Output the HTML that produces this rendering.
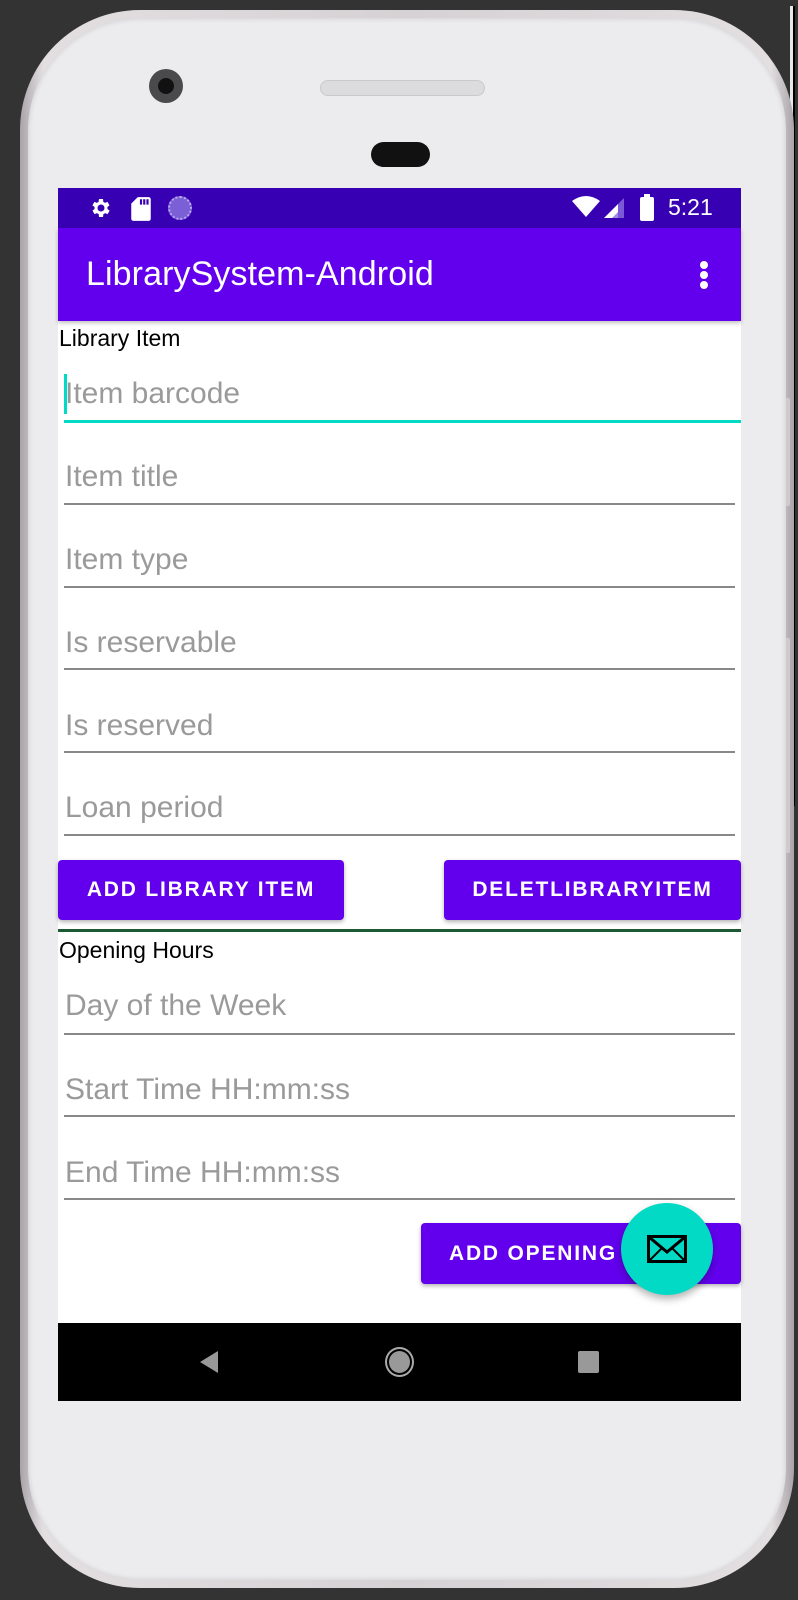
<!DOCTYPE html>
<html><head><meta charset="utf-8">
<style>
*{margin:0;padding:0;box-sizing:border-box}
body{width:798px;height:1600px;background:#333333;position:relative;overflow:hidden;font-family:"Liberation Sans",sans-serif}
.abs{position:absolute}
.frame{left:20px;top:10px;width:774px;height:1578px;border-radius:120px;background:linear-gradient(90deg,#a9a3a7,#e3dfe1 3%,#d6d1d4 50%,#e3dfe1 97%,#a9a3a7)}
.body{left:28px;top:18px;width:758px;height:1562px;border-radius:112px;background:#ececee;box-shadow:inset 0 0 6px rgba(0,0,0,.15)}
.screen{left:58px;top:188px;width:683px;height:1213px;background:#fff}
.status{left:58px;top:188px;width:683px;height:40px;background:#3700b3}
.appbar{left:58px;top:228px;width:683px;height:93px;background:#6200ee;box-shadow:0 2px 4px rgba(0,0,0,.25)}
.title{left:86px;top:255px;color:#fff;font-size:34px;letter-spacing:0.1px}
.lbl{left:59px;color:#000;font-size:23px}
.hint{left:65px;color:#9a9a9a;font-size:30px}
.ul{left:64px;width:671px;height:2px;background:#888}
.btn{background:#6200ee;color:#fff;font-size:21px;font-weight:bold;letter-spacing:1.8px;border-radius:4px;box-shadow:0 2px 4px rgba(0,0,0,.3);display:flex;align-items:center;justify-content:center}
.nav{left:58px;top:1323px;width:683px;height:78px;background:#000}
</style></head><body>
<div class="abs" style="left:793px;top:6px;width:2px;height:800px;background:#000"></div>
<div class="abs" style="left:790px;top:6px;width:3px;height:800px;background:#e8e8e8"></div>
<div class="abs frame"></div>
<div class="abs" style="left:783px;top:398px;width:7px;height:108px;background:#cfcacc;border-radius:2px"></div>
<div class="abs" style="left:783px;top:638px;width:7px;height:215px;background:#cfcacc;border-radius:2px"></div>
<div class="abs body"></div>
<div class="abs" style="left:149px;top:69px;width:34px;height:34px;border-radius:50%;background:#4a4a4c"></div>
<div class="abs" style="left:158px;top:78px;width:16px;height:16px;border-radius:50%;background:#111"></div>
<div class="abs" style="left:320px;top:80px;width:165px;height:16px;border-radius:8px;background:#dcdcde;border:1px solid #c9c9cb"></div>
<div class="abs" style="left:371px;top:142px;width:59px;height:25px;border-radius:13px;background:#111"></div>

<div class="abs screen"></div>
<div class="abs status"></div>
<svg class="abs" style="left:88px;top:196px" width="24" height="24" viewBox="0 0 24 24"><path fill="#fff" d="M19.4 13a7.5 7.5 0 0 0 0-2l2.1-1.6-2-3.5-2.5 1a7.4 7.4 0 0 0-1.7-1L15 3h-4l-.4 2.9a7.4 7.4 0 0 0-1.7 1l-2.5-1-2 3.5L6.6 11a7.5 7.5 0 0 0 0 2l-2.1 1.6 2 3.5 2.5-1c.5.4 1.1.8 1.7 1L11 21h4l.4-2.9c.6-.2 1.2-.6 1.7-1l2.5 1 2-3.5zM13 15.5a3.5 3.5 0 1 1 0-7 3.5 3.5 0 0 1 0 7z"/></svg>
<svg class="abs" style="left:130px;top:196px" width="22" height="26" viewBox="0 0 20 24"><path fill="#fff" d="M7 1h10a2 2 0 0 1 2 2v18a2 2 0 0 1-2 2H3a2 2 0 0 1-2-2V7z"/><path fill="#3700b3" d="M9 3h2v5H9zM12 3h2v5h-2zM15 3h2v5h-2z"/></svg>
<div class="abs" style="left:168px;top:196px;width:24px;height:24px;border-radius:50%;background:#7b5fd6;border:2px dotted #b9a9ee"></div>
<svg class="abs" style="left:572px;top:195px" width="60" height="30" viewBox="0 0 60 30"><path fill="#fff" d="M0 6 Q14 -4 28 6 L14 22z"/><path fill="#fff" d="M32 23 L46 9 V23z"/><path fill="#8c6fe0" d="M40 23 L46 17 V9 L52 3 V23z" opacity=".8"/></svg>
<div class="abs" style="left:640px;top:197px;width:14px;height:24px;background:#fff;border-radius:2px"></div>
<div class="abs" style="left:644px;top:194px;width:6px;height:4px;background:#fff"></div>
<div class="abs" style="left:668px;top:194px;color:#fff;font-size:23px">5:21</div>

<div class="abs appbar"></div>
<div class="abs title">LibrarySystem-Android</div>
<div class="abs" style="left:700px;top:261px;width:8px;height:8px;border-radius:50%;background:#fff"></div>
<div class="abs" style="left:700px;top:271px;width:8px;height:8px;border-radius:50%;background:#fff"></div>
<div class="abs" style="left:700px;top:281px;width:8px;height:8px;border-radius:50%;background:#fff"></div>

<div class="abs lbl" style="top:325px">Library Item</div>
<div class="abs" style="left:64px;top:374px;width:3px;height:40px;background:#03dac5"></div>
<div class="abs hint" style="top:377px">Item barcode</div>
<div class="abs" style="left:64px;top:420px;width:677px;height:3px;background:#03dac5"></div>
<div class="abs hint" style="top:460px">Item title</div>
<div class="abs ul" style="top:503px"></div>
<div class="abs hint" style="top:543px">Item type</div>
<div class="abs ul" style="top:586px"></div>
<div class="abs hint" style="top:626px">Is reservable</div>
<div class="abs ul" style="top:668px"></div>
<div class="abs hint" style="top:709px">Is reserved</div>
<div class="abs ul" style="top:751px"></div>
<div class="abs hint" style="top:791px">Loan period</div>
<div class="abs ul" style="top:834px"></div>

<div class="abs btn" style="left:58px;top:860px;width:286px;height:60px">ADD LIBRARY ITEM</div>
<div class="abs btn" style="left:444px;top:860px;width:297px;height:60px">DELETLIBRARYITEM</div>
<div class="abs" style="left:58px;top:929px;width:683px;height:3px;background:#1b5a32"></div>
<div class="abs lbl" style="top:937px">Opening Hours</div>
<div class="abs hint" style="top:989px">Day of the Week</div>
<div class="abs ul" style="top:1033px"></div>
<div class="abs hint" style="top:1073px">Start Time HH:mm:ss</div>
<div class="abs ul" style="top:1115px"></div>
<div class="abs hint" style="top:1156px">End Time HH:mm:ss</div>
<div class="abs ul" style="top:1198px"></div>
<div class="abs btn" style="left:421px;top:1223px;width:320px;height:61px;justify-content:flex-start;padding-left:28px">ADD OPENING HOURS</div>
<div class="abs" style="left:621px;top:1203px;width:92px;height:92px;border-radius:50%;background:#03dac5;box-shadow:0 4px 8px rgba(0,0,0,.3)"></div>
<svg class="abs" style="left:647px;top:1235px" width="40" height="28" viewBox="0 0 40 28"><rect x="1.5" y="1.5" width="37" height="25" fill="none" stroke="#000" stroke-width="3"/><path d="M2 2 L20 17 L38 2" fill="none" stroke="#000" stroke-width="3"/><path d="M2 26 L15 13 M38 26 L25 13" stroke="#000" stroke-width="2"/></svg>

<div class="abs nav"></div>
<svg class="abs" style="left:198px;top:1350px" width="22" height="24" viewBox="0 0 22 24"><path fill="#999" d="M2 12 L20 1 V23z"/></svg>
<div class="abs" style="left:385px;top:1347px;width:29px;height:30px;border-radius:50%;border:2px solid #aaa;background:#000"></div>
<div class="abs" style="left:389px;top:1351px;width:21px;height:22px;border-radius:50%;background:#999"></div>
<div class="abs" style="left:578px;top:1351px;width:21px;height:22px;border-radius:2px;background:#999"></div>
</body></html>
